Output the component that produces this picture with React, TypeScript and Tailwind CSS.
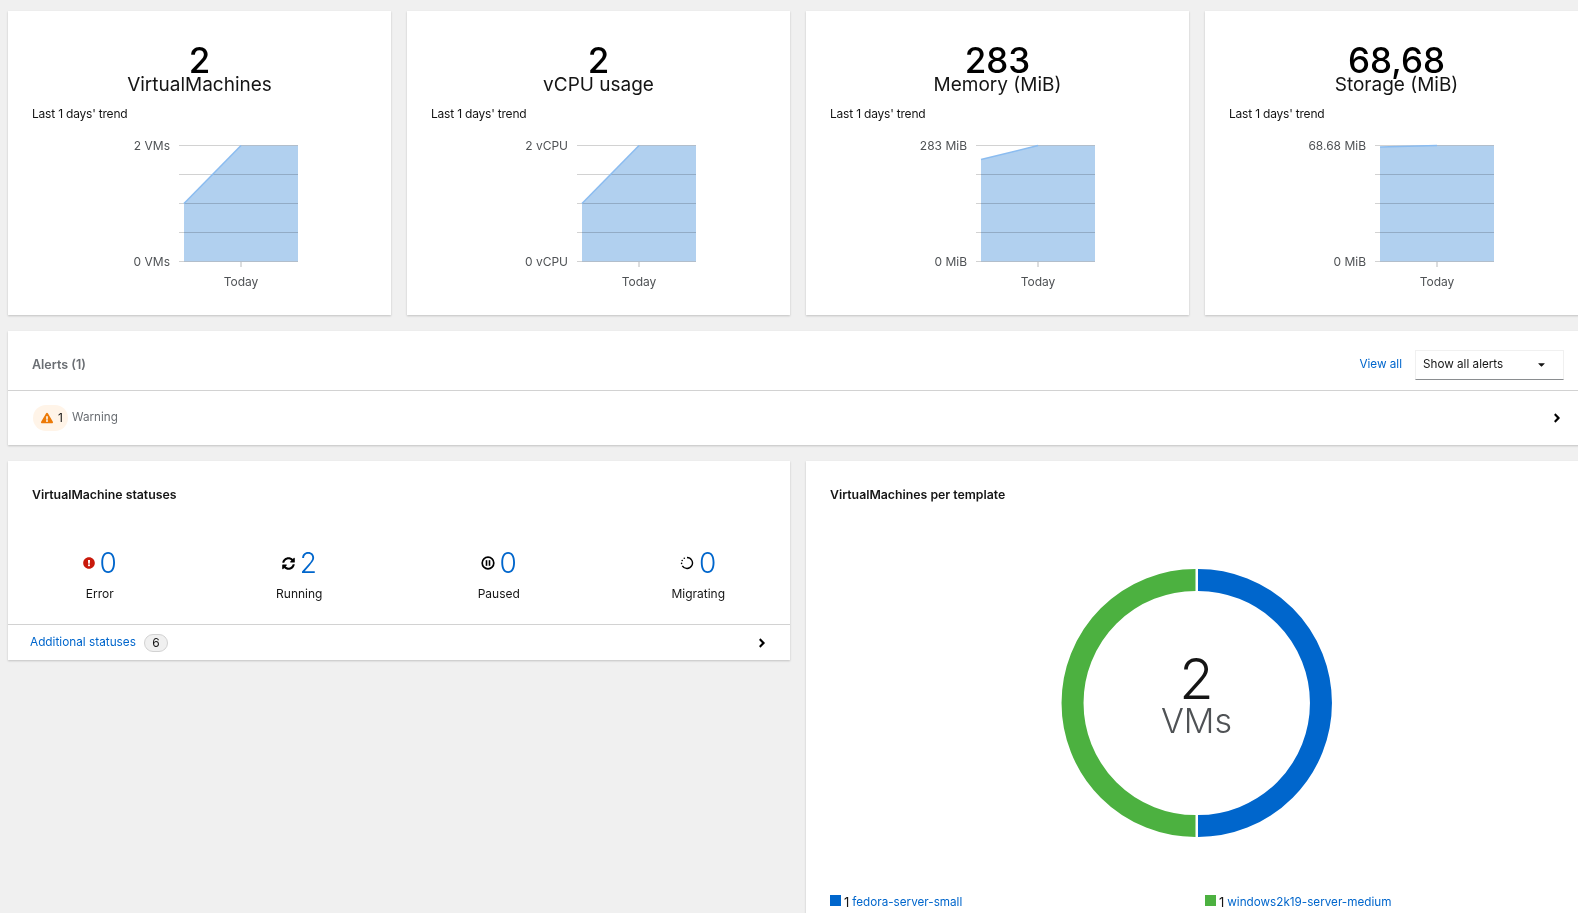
import { FaAngleRight, FaCaretDown, FaExclamationCircle, FaExclamationTriangle, FaSyncAlt } from 'react-icons/fa';

type Trend = {
  value: string;
  title: string;
  top: string;
  bottom: string;
  startY: number;
  left: number;
};

const trends: Trend[] = [
  { value: '2', title: 'VirtualMachines', top: '2 VMs', bottom: '0 VMs', startY: 78.5, left: 176 },
  { value: '2', title: 'vCPU usage', top: '2 vCPU', bottom: '0 vCPU', startY: 78.5, left: 175 },
  { value: '283', title: 'Memory (MiB)', top: '283 MiB', bottom: '0 MiB', startY: 34.5, left: 175 },
  { value: '68,68', title: 'Storage (MiB)', top: '68.68 MiB', bottom: '0 MiB', startY: 22, left: 175 },
];

function TrendChart({ trend }: { trend: Trend }) {
  const l = trend.left;
  const r = l + 114;
  const mid = l + 57;
  const rows = [20.5, 49.5, 78.5, 107.5, 136.5];
  return (
    <svg width="383" height="172" className="block">
      {rows.map((y) => (
        <line key={y} x1={l - 5} x2={r} y1={y} y2={y} stroke="#d2d2d2" />
      ))}
      <path className="mix-blend-multiply" d={`M${l} ${trend.startY} L${mid} 20.5 L${r} 20.5 L${r} 136.5 L${l} 136.5 Z`} fill="#b1d0ef" />
      <path d={`M${l} ${trend.startY} L${mid} 20.5`} fill="none" stroke="#8bbcf0" strokeWidth="1.5" />
      <line x1={mid} x2={mid} y1="137" y2="142" stroke="#b8bbbe" />
      <text x={l - 14} y="25" textAnchor="end" fontSize="12" fill="#4f5255">{trend.top}</text>
      <text x={l - 14} y="141" textAnchor="end" fontSize="12" fill="#4f5255">{trend.bottom}</text>
      <text x={mid} y="161" textAnchor="middle" fontSize="12" fill="#4f5255">Today</text>
    </svg>
  );
}

function TrendCard({ trend }: { trend: Trend }) {
  return (
    <div className="h-[304px] bg-white shadow-[0_1px_2px_rgba(3,3,3,0.2)]">
      <div className="pt-[29px] text-center">
        <div className="h-[40px] text-[35px] leading-[40px] font-medium text-black">{trend.value}</div>
        <div className="-mt-[7px] text-[19px] leading-[24px] text-[#151515]">{trend.title}</div>
      </div>
      <div className="mt-[8px] pl-[24px] text-[12px] leading-[18px] tracking-[-0.2px] text-[#151515]">Last 1 days' trend</div>
      <div className="pt-[2px]">
        <TrendChart trend={trend} />
      </div>
    </div>
  );
}

function PauseIcon() {
  return (
    <svg width="14" height="14" viewBox="0 0 14 14">
      <circle cx="7" cy="7" r="5.8" fill="none" stroke="#000" strokeWidth="1.7" />
      <rect x="4.7" y="4.2" width="1.6" height="5.6" fill="#000" />
      <rect x="7.7" y="4.2" width="1.6" height="5.6" fill="#000" />
    </svg>
  );
}

function MigratingIcon() {
  return (
    <svg width="14" height="14" viewBox="0 0 14 14">
      <path d="M7 1.5 A5.5 5.5 0 1 1 2.3 9.9" fill="none" stroke="#000" strokeWidth="1.4" />
      <circle cx="1.6" cy="7.4" r="0.8" fill="#000" />
      <circle cx="2.2" cy="4.5" r="0.8" fill="#000" />
      <circle cx="4.3" cy="2.2" r="0.8" fill="#000" />
    </svg>
  );
}

const statuses = [
  { label: 'Error', count: '0', icon: <FaExclamationCircle className="text-[12px] text-[#c9190b]" /> },
  { label: 'Running', count: '2', icon: <FaSyncAlt className="text-[13px] text-black" /> },
  { label: 'Paused', count: '0', icon: <PauseIcon /> },
  { label: 'Migrating', count: '0', icon: <MigratingIcon /> },
];

function Donut() {
  return (
    <svg width="772" height="290" className="block">
      <path d="M392 12 A123 123 0 0 1 392 258" fill="none" stroke="#0066cc" strokeWidth="22" />
      <path d="M389.5 12 A123 123 0 0 0 389.5 258" fill="none" stroke="#4cb140" strokeWidth="22" />
      <text x="390.5" y="131" textAnchor="middle" fontSize="56" fontWeight="300" fill="#151515">2</text>
      <text x="390.5" y="165" textAnchor="middle" fontSize="34" fontWeight="300" fill="#4f5255">VMs</text>
    </svg>
  );
}

export default function App() {
  return (
    <div className="h-screen w-[1578px] overflow-hidden bg-[#f0f0f0] font-['Inter',sans-serif] text-[13px] text-[#151515]">
      <div className="w-[1580px] ml-2 pt-[11px] space-y-4">
        <div className="grid grid-cols-4 gap-4">
          {trends.map((t) => (
            <TrendCard key={t.title} trend={t} />
          ))}
        </div>

        {/* Alerts */}
        <div className="bg-white shadow-[0_1px_2px_rgba(3,3,3,0.2)]">
          <div className="flex h-[60px] items-center justify-between border-b border-[#d2d2d2] pl-[24px] pr-6 pt-[8px]">
            <span className="pt-[2px] text-[12.5px] font-semibold text-[#6a6e73]">Alerts (1)</span>
            <div className="flex items-center gap-[13px]">
              <a className="text-[11.7px] text-[#0066cc]">View all</a>
              <div className="flex h-[30px] w-[149px] items-center justify-between border border-[#f0f0f0] border-b-[#8a8d90] pl-[7px] pr-[16px] text-[11.7px]">
                Show all alerts
                <FaCaretDown className="text-[11px]" />
              </div>
            </div>
          </div>
          <div className="flex h-[54px] items-center pl-[25px] pr-[24px]">
            <span className="flex h-[26px] w-[35px] items-center gap-[5px] rounded-full bg-[#fff4e8] pl-2 text-[12px]">
              <FaExclamationTriangle className="text-[12px] text-[#ec7a08]" />1
            </span>
            <span className="ml-[4px] text-[11.7px] text-[#6a6e73]">Warning</span>
            <FaAngleRight className="ml-auto text-[14px] text-black" />
          </div>
        </div>

        <div className="grid grid-cols-2 items-start gap-4">
          <div className="bg-white shadow-[0_1px_2px_rgba(3,3,3,0.2)]">
            <div className="pl-[24px] pt-[25px] text-[12.3px] leading-[18px] font-semibold text-[#151515]">VirtualMachine statuses</div>
            <div className="-mx-2 mt-[44px] grid h-[76px] grid-cols-4">
              {statuses.map((s) => (
                <div key={s.label} className="flex flex-col items-center">
                  <div className="flex h-[30px] items-center gap-[5px]">
                    {s.icon}
                    <span className="text-[28px] leading-[30px] font-light text-[#0066cc]">{s.count}</span>
                  </div>
                  <span className="mt-[7px] text-[12px] leading-[18px] text-[#151515]">{s.label}</span>
                </div>
              ))}
            </div>
            <div className="flex h-[36px] items-center border-t border-[#d2d2d2] pl-[22px] pr-[21px]">
              <a className="text-[11.8px] text-[#0066cc]">Additional statuses</a>
              <span className="ml-[8px] flex h-[18px] w-[24px] items-center justify-center rounded-full border border-[#d2d2d2] bg-[#f0f0f0] text-[12px]">6</span>
              <FaAngleRight className="ml-auto text-[14px] text-black" />
            </div>
          </div>

          <div className="h-[600px] bg-white shadow-[0_1px_2px_rgba(3,3,3,0.2)]">
            <div className="pl-[24px] pt-[25px] text-[12.3px] leading-[18px] font-semibold text-[#151515]">VirtualMachines per template</div>
            <div className="pt-[64px]">
              <Donut />
            </div>
            <div className="mt-[35px] grid grid-cols-2 pl-[24px] pr-[8px] text-[11.7px]">
              <div className="flex items-center gap-[3px]">
                <span className="-mt-[4px] h-[11px] w-[11px] bg-[#0066cc]" />
                <span className="text-[13px]">1</span>
                <a className="text-[#0066cc]">fedora-server-small</a>
              </div>
              <div className="flex items-center gap-[3px]">
                <span className="-mt-[4px] h-[11px] w-[11px] bg-[#4cb140]" />
                <span className="text-[13px]">1</span>
                <a className="text-[#0066cc]">windows2k19-server-medium</a>
              </div>
            </div>
          </div>
        </div>
      </div>
    </div>
  );
}
